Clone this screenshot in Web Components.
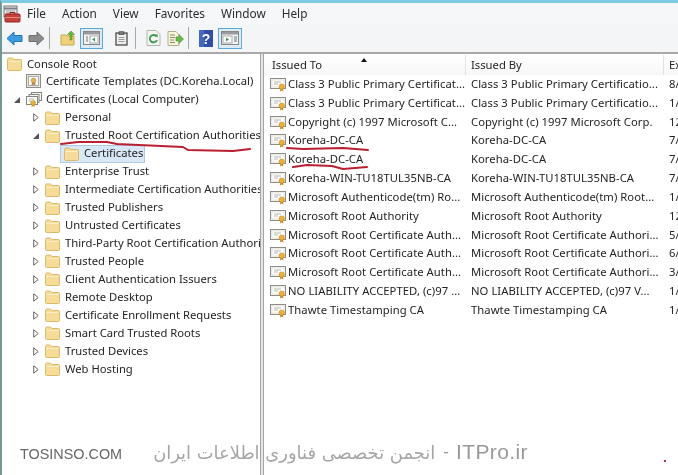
<!DOCTYPE html>
<html><head><meta charset="utf-8"><style>
html,body{margin:0;padding:0;background:#fff;overflow:hidden}
body{font:11.25px "Noto Sans","Liberation Sans",sans-serif;color:#242424}
</style></head><body>
<mmc-window>
  <mmc-menubar slot="menu">
    <span>File</span><span>Action</span><span>View</span><span>Favorites</span><span>Window</span><span>Help</span>
  </mmc-menubar>
  <mmc-toolbar slot="tools"></mmc-toolbar>
  <mmc-tree slot="tree">
    <tree-item level="0" icon="folder">Console Root</tree-item>
    <tree-item level="1" icon="cert">Certificate Templates (DC.Koreha.Local)</tree-item>
    <tree-item level="1" icon="store" exp="open">Certificates (Local Computer)</tree-item>
    <tree-item level="2" icon="folder" exp="closed">Personal</tree-item>
    <tree-item level="2" icon="folder" exp="open">Trusted Root Certification Authorities</tree-item>
    <tree-item level="3" icon="folder" selected>Certificates</tree-item>
    <tree-item level="2" icon="folder" exp="closed">Enterprise Trust</tree-item>
    <tree-item level="2" icon="folder" exp="closed">Intermediate Certification Authorities</tree-item>
    <tree-item level="2" icon="folder" exp="closed">Trusted Publishers</tree-item>
    <tree-item level="2" icon="folder" exp="closed">Untrusted Certificates</tree-item>
    <tree-item level="2" icon="folder" exp="closed">Third-Party Root Certification Authorities</tree-item>
    <tree-item level="2" icon="folder" exp="closed">Trusted People</tree-item>
    <tree-item level="2" icon="folder" exp="closed">Client Authentication Issuers</tree-item>
    <tree-item level="2" icon="folder" exp="closed">Remote Desktop</tree-item>
    <tree-item level="2" icon="folder" exp="closed">Certificate Enrollment Requests</tree-item>
    <tree-item level="2" icon="folder" exp="closed">Smart Card Trusted Roots</tree-item>
    <tree-item level="2" icon="folder" exp="closed">Trusted Devices</tree-item>
    <tree-item level="2" icon="folder" exp="closed">Web Hosting</tree-item>
  </mmc-tree>
  <cert-list slot="list">
    <cert-row>Class 3 Public Primary Certificat...<span slot="by">Class 3 Public Primary Certificatio...</span><span slot="exp">8/</span></cert-row>
    <cert-row>Class 3 Public Primary Certificat...<span slot="by">Class 3 Public Primary Certificatio...</span><span slot="exp">1/</span></cert-row>
    <cert-row>Copyright (c) 1997 Microsoft C...<span slot="by">Copyright (c) 1997 Microsoft Corp.</span><span slot="exp">12</span></cert-row>
    <cert-row>Koreha-DC-CA<span slot="by">Koreha-DC-CA</span><span slot="exp">7/</span></cert-row>
    <cert-row>Koreha-DC-CA<span slot="by">Koreha-DC-CA</span><span slot="exp">7/</span></cert-row>
    <cert-row>Koreha-WIN-TU18TUL35NB-CA<span slot="by">Koreha-WIN-TU18TUL35NB-CA</span><span slot="exp">7/</span></cert-row>
    <cert-row>Microsoft Authenticode(tm) Ro...<span slot="by">Microsoft Authenticode(tm) Root...</span><span slot="exp">1/</span></cert-row>
    <cert-row>Microsoft Root Authority<span slot="by">Microsoft Root Authority</span><span slot="exp">12</span></cert-row>
    <cert-row>Microsoft Root Certificate Auth...<span slot="by">Microsoft Root Certificate Authori...</span><span slot="exp">5/</span></cert-row>
    <cert-row>Microsoft Root Certificate Auth...<span slot="by">Microsoft Root Certificate Authori...</span><span slot="exp">6/</span></cert-row>
    <cert-row>Microsoft Root Certificate Auth...<span slot="by">Microsoft Root Certificate Authori...</span><span slot="exp">3/</span></cert-row>
    <cert-row>NO LIABILITY ACCEPTED, (c)97 ...<span slot="by">NO LIABILITY ACCEPTED, (c)97 V...</span><span slot="exp">1/</span></cert-row>
    <cert-row>Thawte Timestamping CA<span slot="by">Thawte Timestamping CA</span><span slot="exp">1/</span></cert-row>
  </cert-list>
  <red-marks slot="over"></red-marks>
  <water-mark slot="over"></water-mark>
</mmc-window>
<script>
const folderSvg=`<svg width="15" height="14" viewBox="0 0 15 14"><path d="M.5 2.500q0-1.500 1.500-1.500h3.500l1.500 1.500h6.500q1 0 1 1v9q0 1-1 1H1.500q-1 0-1-1z" fill="#f6dc97" stroke="#d9bb6c"/><path d="M1.500 4.500h12" stroke="#fbeec6"/></svg>`;
const certSvg=`<svg width="17" height="15" viewBox="0 0 17 15"><rect x=".5" y="1.500" width="15" height="10" fill="#f7f7f5" stroke="#8d8d88"/><rect x="2" y="3" width="12" height="7" fill="#fff" stroke="#d5d5cf" stroke-width=".6"/><path d="M4 5h7M4 7h4" stroke="#b5b5b0"/><path d="M10.500 11l-.6 3.500 1.800-1 1.800 1-.6-3.500z" fill="#c48a20"/><circle cx="11.700" cy="9.500" r="2.600" fill="#eeb233" stroke="#c48a20" stroke-width=".6"/></svg>`;
const storeSvg=`<svg width="17" height="16" viewBox="0 0 17 16"><rect x="5.500" y=".5" width="10" height="8" fill="#f4f3ef" stroke="#85857f"/><rect x="3" y="2.500" width="10" height="8" fill="#f7f7f5" stroke="#85857f"/><rect x=".5" y="4.500" width="11" height="8" fill="#fff" stroke="#85857f"/><path d="M2.500 7h6M2.500 9h3" stroke="#b5b5b0"/><path d="M6 12l-.5 3 1.600-.9 1.600.9-.5-3z" fill="#c48a20"/><circle cx="7.100" cy="11" r="2.400" fill="#eeb233" stroke="#c48a20" stroke-width=".6"/></svg>`;
const templateSvg=`<svg width="15" height="15" viewBox="0 0 15 15"><rect x=".5" y=".5" width="14" height="13" fill="#e6e6e2" stroke="#8f8f8a"/><rect x="2.500" y="2.500" width="10" height="9" fill="#fff" stroke="#aaa"/><circle cx="7.500" cy="6.500" r="2.400" fill="#e3b44f" stroke="#b5832a" stroke-width=".6"/><path d="M6 8.500l-.5 3 2-1 2 1-.5-3z" fill="#b5832a"/></svg>`;
function def(name,html,init){customElements.define(name,class extends HTMLElement{constructor(){super();this.attachShadow({mode:"open"}).innerHTML=html;}connectedCallback(){init&&init(this)}})}

def("mmc-window",`<style>
:host{display:flex;flex-direction:column;width:678px;height:475px;box-sizing:border-box;border-left:2px solid #6f9a93;border-top:3px solid #7ccbe0;position:relative;overflow:hidden;background:#fff;filter:blur(.3px)}
.panes{flex:1;display:grid;grid-template-columns:258px 4px 1fr;min-height:0;border-top:2px solid #a9a9a9}
.split{background:#e4e4e4;border-left:1px solid #a4a4a4;border-right:1px solid #a4a4a4}
</style>
<slot name="menu"></slot><slot name="tools"></slot>
<div class="panes"><slot name="tree"></slot><div class="split"></div><slot name="list"></slot></div>
<slot name="over"></slot>`);

def("mmc-menubar",`<style>
:host{display:flex;height:21px;box-sizing:border-box;padding:0 0 2px 25px;align-items:center;gap:16px;background:#f6f7f8;font-size:11.8px;color:#2c2c2c;position:relative}
svg{position:absolute;left:1px;top:2px}
::slotted(span){display:block}
</style>
<svg width="18" height="18" viewBox="0 0 18 18"><rect x="1" y="1" width="13" height="11" fill="#e8e8e8" stroke="#77777a"/><path d="M1 3.500h13" stroke="#7f7f88" stroke-width="2"/><path d="M3 6h9M3 8h9" stroke="#a5a5a5"/><rect x="2" y="9" width="15" height="8" rx="1" fill="#c8423a" stroke="#91251f"/><path d="M7 9V7.500h5V9" fill="none" stroke="#91251f"/><path d="M2 12.500h15" stroke="#e78a80"/></svg>
<slot></slot>`);

def("mmc-toolbar",`<style>
:host{display:flex;height:28px;align-items:center;padding-left:1px;background:#f4f5f6;box-sizing:border-box}
svg{display:block;flex:none}
.sep{width:1px;height:22px;background:#a8a8a8;flex:none}
.tog{width:23px;height:21px;box-sizing:border-box;border:1px solid #5aaad6;background:#d9ecf8;display:flex;align-items:center;justify-content:center;flex:none}
</style>
<svg width="17" height="15" viewBox="0 0 17 15" style="margin-left:3px"><path d="M8 1L1 7.500 8 14v-3.500h8v-6H8z" fill="#3d9be0" stroke="#1c74bb"/></svg>
<svg width="17" height="15" viewBox="0 0 17 15" style="margin-left:5px"><path d="M9 1l7 6.500L9 14v-3.500H1v-6h8z" fill="#8c8c8c" stroke="#6f6f6f"/></svg>
<div class="sep" style="margin-left:4px"></div>
<svg width="16" height="16" viewBox="0 0 16 16" style="margin-left:10px"><path d="M1 5h5l1 1h7v9H1z" fill="#f0d27e" stroke="#c9a74e"/><path d="M10 10V4.500H7.500L11 1l3.500 3.500H12V10z" fill="#6eb83f" stroke="#4f8e2a" stroke-width=".6"/></svg>
<div class="tog" style="margin-left:4px"><svg width="17" height="14" viewBox="0 0 17 14"><rect x=".5" y=".5" width="16" height="13" fill="#f3f3f3" stroke="#888"/><rect x="1" y="1" width="15" height="2.500" fill="#9a9a9a"/><rect x="7" y="5" width="8" height="7" fill="#fff" stroke="#aaa"/><path d="M3 6h2M3 8h2M3 10h2" stroke="#777"/><path d="M12 6.500l-3 2 3 2z" fill="#3e9b5c"/></svg></div>
<svg width="13" height="15" viewBox="0 0 13 15" style="margin-left:12px"><rect x="1" y="2" width="11" height="12" fill="#eee" stroke="#4b4b4b" stroke-width="1.300"/><rect x="4" y=".7" width="5" height="3" fill="#777" stroke="#444" stroke-width=".6"/><path d="M3.500 6.500h6M3.500 8.500h6M3.500 10.500h6" stroke="#999"/></svg>
<div class="sep" style="margin-left:7px"></div>
<svg width="15" height="16" viewBox="0 0 15 16" style="margin-left:10px"><path d="M1 .5h9l4 4v11H1z" fill="#f6f6f4" stroke="#b5b5b0"/><path d="M10.500 6.500a3.700 3.700 0 1 0 .5 3.500" fill="none" stroke="#3a9a50" stroke-width="1.800"/><path d="M8.500 5l3-.8.3 3.400z" fill="#3a9a50"/></svg>
<svg width="17" height="15" viewBox="0 0 17 15" style="margin-left:6px"><path d="M1 .5h8l3 3v11H1z" fill="#f9f4dc" stroke="#b5ad8c"/><path d="M3 4h5M3 6.500h5M3 9h4M3 11.500h5" stroke="#8c8a70"/><path d="M9 6h3V3.500L16.500 8 12 12.500V10H9z" fill="#61bd4a" stroke="#3f9530" stroke-width=".6"/></svg>
<div class="sep" style="margin-left:4px"></div>
<svg width="14" height="17" viewBox="0 0 14 17" style="margin-left:10px"><rect width="14" height="17" fill="#2f4fa8"/><rect width="5" height="17" fill="#4468c5"/><text x="7" y="13.500" font-family="Liberation Sans" font-weight="700" font-size="14" fill="#fff" text-anchor="middle">?</text></svg>
<div class="tog" style="margin-left:5px;width:24px"><svg width="18" height="14" viewBox="0 0 18 14"><rect x=".5" y=".5" width="17" height="13" fill="#f3f3f3" stroke="#888"/><rect x="1" y="1" width="16" height="2.500" fill="#9a9a9a"/><rect x="2" y="5" width="9" height="7" fill="#fff" stroke="#aaa"/><path d="M13 6h3M13 8h3M13 10h3" stroke="#777"/><path d="M5 6.500l3 2-3 2z" fill="#3e9b5c"/></svg></div>`);

def("mmc-tree",`<style>:host{display:block;overflow:hidden;padding-top:1px;background:#fff;min-width:0}</style><slot></slot>`);

def("tree-item",`<style>
:host{display:block;height:17.96px;white-space:nowrap;line-height:18px}
.row{display:flex;align-items:center;height:18px}
.exp{width:19px;margin-left:-19px;flex:none;height:18px;display:flex;align-items:center;justify-content:flex-end;padding-right:6px;box-sizing:border-box}
.ic{width:20px;flex:none;display:flex;align-items:center;height:18px}
.t{display:inline-block;position:relative;top:-.5px}
:host([selected]) .row{position:relative}
:host([selected]) .bg{position:absolute;left:-4px;top:0;width:85px;height:18px;box-sizing:border-box;background:#d9e8f6;border:1px solid #aecbe6}
.ic{position:relative}
</style><div class="row"><span class="exp"></span><span class="bg"></span><span class="ic"></span><span class="t"><slot></slot></span></div>`,
el=>{const s=el.shadowRoot,l=+el.getAttribute("level");s.querySelector(".row").style.marginLeft=(5+19*l)+"px";
 const i=el.getAttribute("icon");
 s.querySelector(".ic").innerHTML=i=="folder"?folderSvg:i=="store"?storeSvg:templateSvg;
 const e=el.getAttribute("exp"),x=s.querySelector(".exp");
 if(e=="closed")x.innerHTML='<svg width="6" height="9" viewBox="0 0 6 9"><path d="M.7.8l4.500 3.700L.7 8.200z" fill="#fff" stroke="#666"/></svg>';
 if(e=="open")x.innerHTML='<svg width="6" height="6" viewBox="0 0 6 6"><path d="M6 0v6H0z" fill="#555"/></svg>';
 if(!e)x.style.display="none";
});

def("cert-list",`<style>
:host{display:block;overflow:hidden;background:#fff;min-width:0;padding-top:1px}
.h{display:grid;grid-template-columns:202px 198px 1fr;height:20px;background:linear-gradient(#fff,#f7f7f7)}
.h div{padding-left:8px;line-height:20px;border-right:1px solid #e2e2e2;position:relative;white-space:nowrap;overflow:hidden}
.h div+div{padding-left:5px}
.h div:last-child{border:0}
.h i{position:absolute;left:97px;top:3px;border:3px solid transparent;border-top:0;border-bottom:4px solid #111}
</style><div class="h"><div>Issued To<i></i></div><div>Issued By</div><div>Ex</div></div><slot></slot>`);

def("cert-row",`<style>
:host{display:grid;grid-template-columns:202px 198px 1fr;height:18.83px;line-height:18.83px;white-space:nowrap;letter-spacing:.05px}
.a{display:flex;align-items:center;padding-left:6px;overflow:hidden}
.a svg{flex:none;margin-right:1px}
.b{padding-left:5px;overflow:hidden}
</style><div class="a">${certSvg}<span><slot></slot></span></div><div class="b"><slot name="by"></slot></div><div class="b"><slot name="exp"></slot></div>`);

def("red-marks",`<style>:host{position:absolute;left:-2px;top:-3px;width:678px;height:475px;pointer-events:none}svg{display:block}</style>
<svg width="678" height="475" fill="none" stroke="#b91f30" stroke-width="2" stroke-linecap="round" stroke-linejoin="round">
<path d="M61 144L78 142L107 142L117 144L183 147L188 150L233 151L250 149"/>
<path d="M287 148L303 149L343 148L368 150"/>
<path d="M293 167L307 165L332 166L343 169L367 167"/>
</svg>`);

def("water-mark",`<style>
:host{position:absolute;left:-2px;top:-3px;width:678px;height:475px;pointer-events:none;font-family:"Liberation Sans",Arial,sans-serif}
.a{position:absolute;left:20px;top:445px;font-size:14.400px;color:#666;line-height:18px}
.b{position:absolute;left:100px;top:439px;width:428px;height:26px;display:flex;flex-direction:row-reverse;align-items:center;white-space:nowrap;color:#a6a6a6}
.c{font-size:21px;letter-spacing:.4px;color:#999}
.m{font-size:17px;margin:0 7px 0 8px;color:#999}
.f{font-family:"DejaVu Sans",sans-serif;font-size:17.900px}
.d{position:absolute;left:664px;top:460px;width:2px;height:2px;background:#a8324c}
</style><div class="a">TOSINSO.COM</div>
<div class="b"><span class="c">ITPro.ir</span><span class="m">-</span><span class="f" dir="rtl">انجمن تخصصی فناوری اطلاعات ایران</span></div><div class="d"></div>`);
</script>
</body></html>
